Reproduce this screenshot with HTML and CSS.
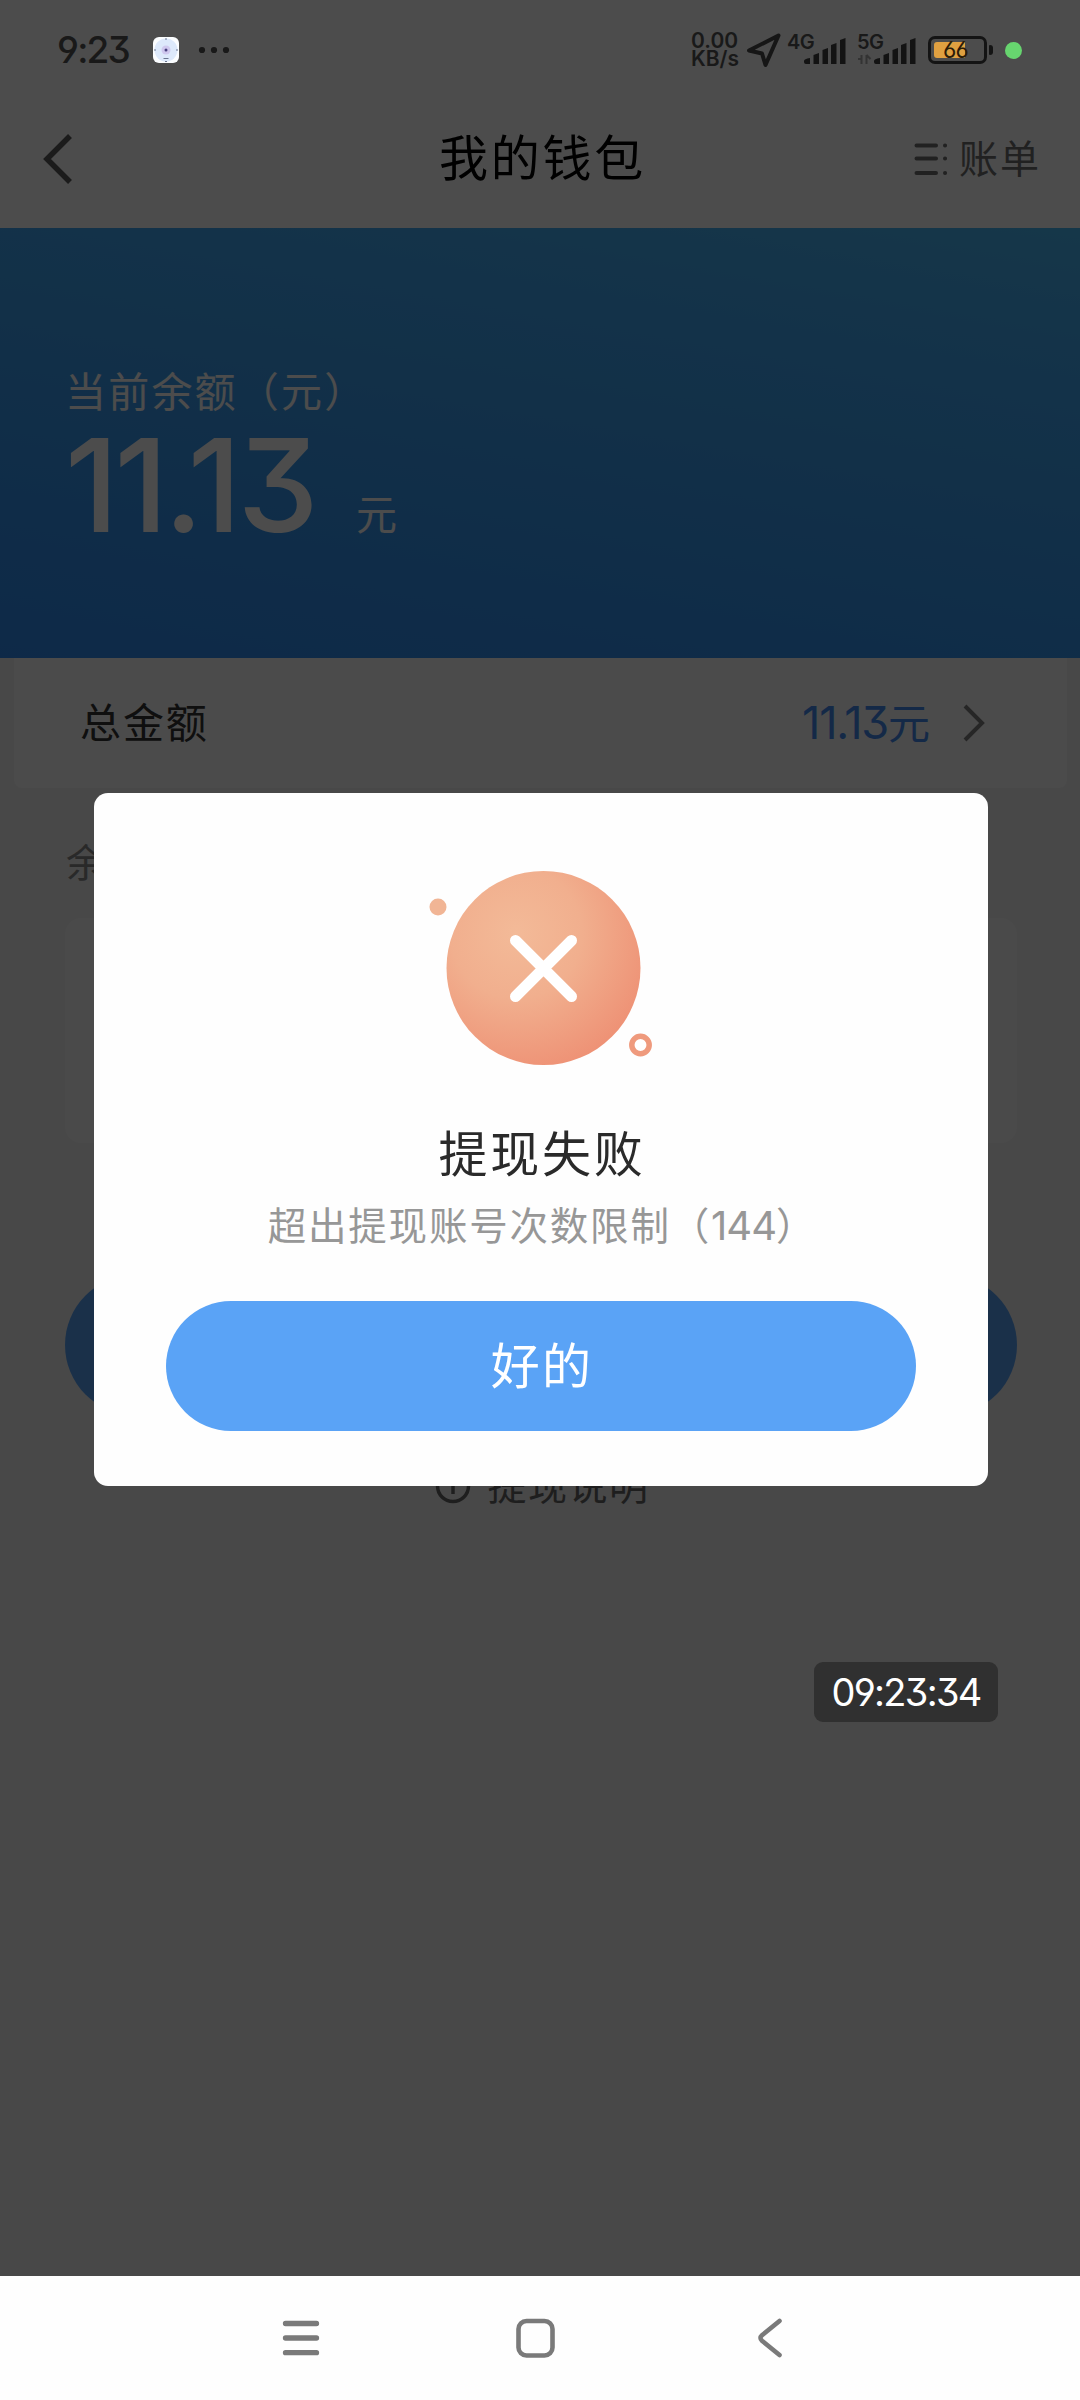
FILE: index.html
```html
<!DOCTYPE html>
<html lang="zh-CN">
<head>
<meta charset="utf-8">
<title>我的钱包</title>
<link rel="stylesheet" href="styles.css">
</head>
<body>
<div class="screen">
  <div class="status">
    <span class="clock">9:23</span>
    <svg class="app-icon" width="26" height="26" viewBox="0 0 26 26"><rect width="26" height="26" rx="6" fill="#fbfdff"/><circle cx="13" cy="13" r="11.5" fill="#dde9fb"/><circle cx="13" cy="13" r="4.5" fill="#cfc8ee"/><circle cx="13" cy="13" r="1.5" fill="#4a4280"/><path d="M1 13h2M23 13h2M12 2h2M10.5 21.500h5M12 24.500h2" stroke="#6b7690" stroke-width="1"/></svg>
    <svg class="more" width="32" height="8" viewBox="0 0 32 8" fill="#191919"><circle cx="4" cy="4" r="3.100"/><circle cx="16" cy="4" r="3.100"/><circle cx="28" cy="4" r="3.100"/></svg>
    <div class="status-right">
      <div class="speed"><span>0.00</span><span>KB/s</span></div>
      <svg class="location" width="36" height="36" viewBox="0 0 36 36"><path d="M3 18.500 32.500 3.500 19.500 33 16 21.500Z" fill="none" stroke="#161616" stroke-width="4" stroke-linejoin="round"/></svg>
      <div class="signal"><span class="gen">4G</span><svg width="60" height="28" viewBox="0 0 60 28" fill="#131313"><path d="M16 23q0-2 6-3v6h-4q-2 0-2-2zM25.500 17l5.500-2v11h-5.500zM34.500 12l5.500-2v16h-5.500zM43 7l5.500-2v21h-5.500zM52 2l5.500-2v26h-5.500z"/></svg></div>
      <div class="signal"><span class="gen">5G</span><svg width="60" height="28" viewBox="0 0 60 28" fill="#131313"><path d="M0 21h3.500v-4M3.500 26v-9M8.500 26v-9M8.500 17l4 4" fill="none" stroke="#333" stroke-width="2"/><path d="M16 23q0-2 6-3v6h-4q-2 0-2-2zM25.500 17l5.500-2v11h-5.500zM34.500 12l5.500-2v16h-5.500zM43 7l5.500-2v21h-5.500zM52 2l5.500-2v26h-5.500z"/></svg></div>
      <div class="battery"><div class="level"></div><span class="percent">66</span></div>
      <i class="battery-tip"></i>
      <i class="privacy-dot"></i>
    </div>
  </div>

  <header class="header">
    <svg class="back" width="30" height="52" viewBox="0 0 30 52"><path d="M27 3 4 26 27 49" fill="none" stroke="#5a5a5a" stroke-width="5.500"/></svg>
    <h1 class="title">我的钱包</h1>
    <div class="bill">
      <svg width="34" height="34" viewBox="0 0 34 34" stroke="#707070" stroke-width="4" stroke-linecap="round"><path d="M2.500 3.500H22M2.500 16.500H22M2.500 31H22M31 3.500h.1M31 16.500h.1M31 31h.1"/></svg>
      <span>账单</span>
    </div>
  </header>

  <section class="balance">
    <div class="balance-label">当前余额（元）</div>
    <div class="balance-value"><span class="balance-number">11.13</span><span class="balance-unit">元</span></div>
  </section>

  <main class="content">
    <div class="total">
      <span class="total-label">总金额</span>
      <span class="total-value"><span class="total-number">11.13</span>元</span>
      <svg width="24" height="40" viewBox="0 0 24 40"><path d="M3 3 20 20 3 37" fill="none" stroke="#808080" stroke-width="4"/></svg>
    </div>
    <div class="section-label">余</div>
    <div class="method"></div>
    <div class="withdraw"></div>
    <div class="note">
      <svg width="36" height="36" viewBox="0 0 36 36" fill="none" stroke="#666" stroke-width="3.500"><circle cx="18" cy="18" r="15.500"/><path d="M18 10v16"/></svg>
      <span>提现说明</span>
    </div>
  </main>

  <nav class="nav">
    <svg width="40" height="40" viewBox="0 0 40 40" stroke="#7a7a7a" stroke-width="5.300" stroke-linecap="round"><path d="M4.500 5.500h31M4.500 20h31M4.500 34.700h31"/></svg>
    <svg width="40" height="40" viewBox="0 0 40 40"><rect x="3.500" y="3" width="34" height="34.500" rx="8" fill="none" stroke="#7a7a7a" stroke-width="4.600"/></svg>
    <svg width="40" height="40" viewBox="0 0 40 40"><path d="M30.500 3 13 17.300Q10 20 13 22.700L30.500 37" fill="none" stroke="#7a7a7a" stroke-width="4.600" stroke-linecap="round"/></svg>
  </nav>

  <div class="overlay">
    <div class="dialog">
      <svg class="fail-icon" width="240" height="200" viewBox="0 0 240 200">
        <defs><radialGradient id="fail" cx="0.360" cy="0.320" r="0.750"><stop offset="0" stop-color="#f3ba98"/><stop offset="0.450" stop-color="#f1af8e"/><stop offset="1" stop-color="#ee9074"/></radialGradient></defs>
        <circle cx="123.500" cy="100" r="97" fill="url(#fail)"/>
        <circle cx="18" cy="39" r="8.500" fill="#f1b595"/>
        <circle cx="220.500" cy="177" r="8.700" fill="#fff" stroke="#ef9a7d" stroke-width="5.500"/>
        <path d="M95.500 72.500 151.500 128.500M151.500 72.500 95.500 128.500" stroke="#fff" stroke-width="11" stroke-linecap="round"/>
      </svg>
      <h2 class="dialog-title">提现失败</h2>
      <p class="dialog-text">超出提现账号次数限制（<span class="code">144</span>）</p>
      <button class="ok">好的</button>
    </div>
  </div>
  <div class="timestamp">09:23:34</div>
</div>
</body>
</html>
```
FILE: styles.css
```css
* { box-sizing: border-box; margin: 0; padding: 0; }
body {
  font-family: Inter, "Noto Sans CJK SC", sans-serif;
  font-feature-settings: "cv09", "cv03", "cv04";
}
.screen {
  position: relative;
  display: flex;
  flex-direction: column;
  width: 1080px;
  height: 2400px;
  overflow: hidden;
  background: #f1f1f1;
}
svg { display: block; flex: none; }

/* status bar sits above the dimming layer */
.status {
  position: relative;
  z-index: 3;
  display: flex;
  align-items: center;
  height: 100px;
  padding-left: 57px;
  color: #191919;
}
.status::before { content: ""; position: absolute; inset: 0; z-index: -1; background: #4c4c4c; }
.clock { width: 96px; font-size: 37px; font-weight: 500; line-height: 40px; letter-spacing: -1.800px; }
.more { margin-left: 19px; }
.status-right { display: flex; align-items: center; margin-left: auto; padding-right: 58px; }
.speed {
  display: flex;
  flex-direction: column;
  width: 55px;
  font-size: 21px;
  font-weight: 600;
  line-height: 18.500px;
}
.location { width: 36px; margin-right: 6px; }
.signal { position: relative; width: 60px; height: 32px; margin-right: 10px; padding-top: 4px; }
.gen { position: absolute; left: -1px; top: -2px; font-size: 20px; font-weight: 600; line-height: 20px; letter-spacing: -0.500px; }
.battery {
  position: relative;
  width: 59px;
  height: 28px;
  padding: 3px;
  border: 3px solid #141414;
  border-radius: 7px;
}
.level { width: 31px; height: 16px; border-radius: 3px 0 0 3px; background: #dfa041; }
.percent { position: absolute; left: 12px; top: 0; font-size: 23px; line-height: 22px; letter-spacing: -1px; color: #2c1c08; }
.battery-tip { width: 4px; height: 10px; margin-left: 2px; border-radius: 1px 3px 3px 1px; background: #141414; }
.privacy-dot { width: 17px; height: 17px; margin-left: 12px; border-radius: 50%; background: #67d56f; }

.header {
  display: flex;
  justify-content: space-between;
  align-items: center;
  height: 128px;
  padding: 0 39px 10px 43px;
  background: #fff;
}
.title { margin-left: 98px; font-size: 49px; font-weight: 400; line-height: 60px; letter-spacing: 2.700px; color: #000; }
.bill { display: flex; align-items: center; gap: 11px; font-size: 39px; line-height: 50px; letter-spacing: 2px; color: #707070; }

.balance {
  height: 430px;
  padding: 139px 65px 0;
  background: linear-gradient(190deg, #49b8f5 0%, #43abf5 20%, #3b9ef0 50%, #3393f0 78%, #2f8bf0 100%);
  color: #fff;
}
.balance-label { font-size: 41px; line-height: 50px; letter-spacing: 2.200px; }
.balance-value { display: flex; align-items: baseline; height: 130px; line-height: 132px; }
.balance-number { width: 291px; font-size: 129px; font-weight: 500; letter-spacing: -4px; transform: translateY(2px); }
.balance-unit { font-size: 41px; }

.content { flex: 1; }
.total {
  display: flex;
  align-items: center;
  height: 130px;
  margin: 0 13px 0 14px;
  padding: 0 81px 0 66px;
  border-radius: 0 0 8px 8px;
  background: #fbfbfb;
}
.total-label { font-size: 41px; line-height: 60px; letter-spacing: 1.900px; color: #333; }
.total-value { margin-left: auto; margin-right: 32px; font-size: 42px; line-height: 60px; color: #458bee; }
.total-number { font-size: 45px; letter-spacing: -1.200px; }
.section-label { margin: 50px 0 0 66px; font-size: 39px; line-height: 50px; color: #8a8a8a; }
.method { height: 225px; margin: 30px 63px 0 65px; border-radius: 16px; background: #f8f8f8; }
.withdraw { height: 140px; margin: 132px 63px 0 65px; border-radius: 70px; background: #59a2f6; }
.note {
  display: flex;
  align-items: center;
  justify-content: center;
  gap: 16px;
  margin: 46px 0 0 5px;
  font-size: 39px;
  line-height: 50px;
  letter-spacing: 1.500px;
  color: #666;
}

.nav {
  position: relative;
  z-index: 2;
  display: flex;
  justify-content: space-between;
  height: 124px;
  padding: 42px 291px 0 281px;
  background: #fefefe;
}

.overlay {
  position: absolute;
  inset: 0 0 124px;
  display: flex;
  align-items: flex-start;
  padding: 793px 92px 0 94px;
  background: rgba(0, 0, 0, 0.7);
}
.dialog {
  display: flex;
  flex-direction: column;
  align-items: center;
  width: 894px;
  height: 693px;
  padding-top: 75px;
  border-radius: 14px;
  background: #fefefe;
}
.fail-icon { margin-right: 2px; }
.dialog-title { margin: 57px 0 0 2px; font-size: 49px; font-weight: 400; line-height: 60px; letter-spacing: 2.700px; color: #2a2a2a; }
.dialog-text { margin: 16px 0 0 2px; font-size: 38.500px; line-height: 50px; letter-spacing: 1.800px; color: #979797; }
.code { font-size: 40px; letter-spacing: -1px; }
.ok {
  width: 750px;
  height: 130px;
  margin-top: 50px;
  padding: 0 0 7px 2px;
  border: 0;
  border-radius: 65px;
  background: #5aa3f6;
  font: inherit;
  font-size: 49px;
  letter-spacing: 2.200px;
  color: #fff;
}
.timestamp {
  position: absolute;
  left: 814px;
  top: 1662px;
  width: 184px;
  height: 60px;
  border-radius: 9px;
  background: #303030;
  font-size: 38px;
  line-height: 60px;
  text-align: center;
  letter-spacing: -1.700px;
  color: #fff;
}
```
